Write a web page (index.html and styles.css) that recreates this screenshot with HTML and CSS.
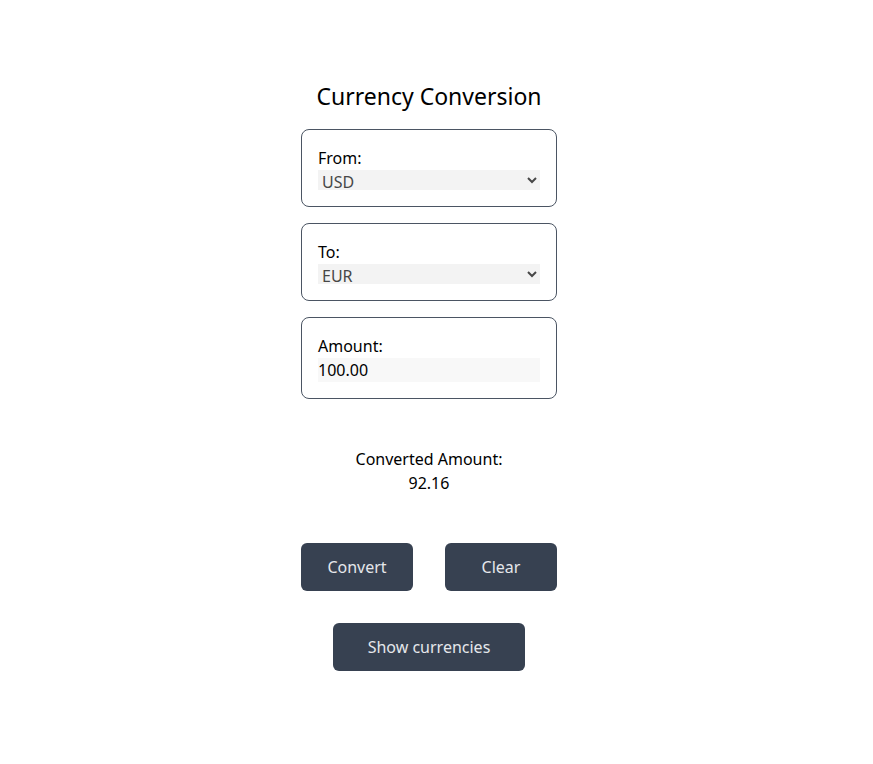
FILE: index.html
```html
<!DOCTYPE html>
<html>
<head>
<meta charset="utf-8">
<link rel="stylesheet" href="styles.css">
</head>
<body>
<div class="page">
  <main class="app">
    <h1 class="title">Currency Conversion</h1>
    <div class="card">
      <label class="label" for="from">From:</label>
      <select id="from" class="select">
        <option>USD</option>
        <option>EUR</option>
      </select>
    </div>
    <div class="card">
      <label class="label" for="to">To:</label>
      <select id="to" class="select">
        <option>EUR</option>
        <option>USD</option>
      </select>
    </div>
    <div class="card">
      <label class="label" for="amount">Amount:</label>
      <input id="amount" class="input" type="text" value="100.00">
    </div>
    <div class="result">
      <div>Converted Amount:</div>
      <div>92.16</div>
    </div>
    <div class="actions">
      <button class="btn btn-sm">Convert</button>
      <button class="btn btn-sm">Clear</button>
    </div>
    <button class="btn btn-lg">Show currencies</button>
  </main>
</div>
</body>
</html>
```
FILE: styles.css
```css
html, body {
  margin: 0;
  padding: 0;
  background: #ffffff;
}
body {
  font-family: "Noto Sans", "Open Sans", sans-serif;
  color: #111;
}
.page {
  width: 858px;
  display: flex;
  justify-content: center;
}
.app {
  width: 256px;
  display: flex;
  flex-direction: column;
  align-items: center;
  padding-top: 80px;
}
.title {
  margin: 0 0 16px 0;
  font-size: 23px;
  line-height: 33px;
  font-weight: 400;
  color: #000;
}
.card {
  box-sizing: border-box;
  width: 256px;
  border: 1px solid #4b5563;
  border-radius: 8px;
  padding: 16px;
  display: flex;
  flex-direction: column;
  margin-bottom: 16px;
}
.label {
  font-size: 16px;
  line-height: 24px;
  color: #000;
}
.select {
  height: 20px;
  border: none;
  background: #f3f3f3;
  color: #474747;
  font-family: inherit;
  font-size: 16px;
  padding: 0;
  margin: 0;
  border-radius: 0;
  outline: none;
}
.input {
  height: 24px;
  box-sizing: border-box;
  border: none;
  background: #f8f8f8;
  color: #000;
  font-family: inherit;
  font-size: 16px;
  padding: 0;
  margin: 0;
  outline: none;
}
.result {
  margin-top: 32px;
  text-align: center;
  font-size: 16px;
  line-height: 24px;
  color: #000;
}
.actions {
  margin-top: 48px;
  display: flex;
  gap: 32px;
}
.btn {
  height: 48px;
  border: none;
  border-radius: 6px;
  background: #374151;
  color: #e5e7eb;
  font-family: inherit;
  font-size: 16px;
  padding: 0;
}
.btn-sm {
  width: 112px;
}
.btn-lg {
  width: 192px;
  margin-top: 32px;
}
```
